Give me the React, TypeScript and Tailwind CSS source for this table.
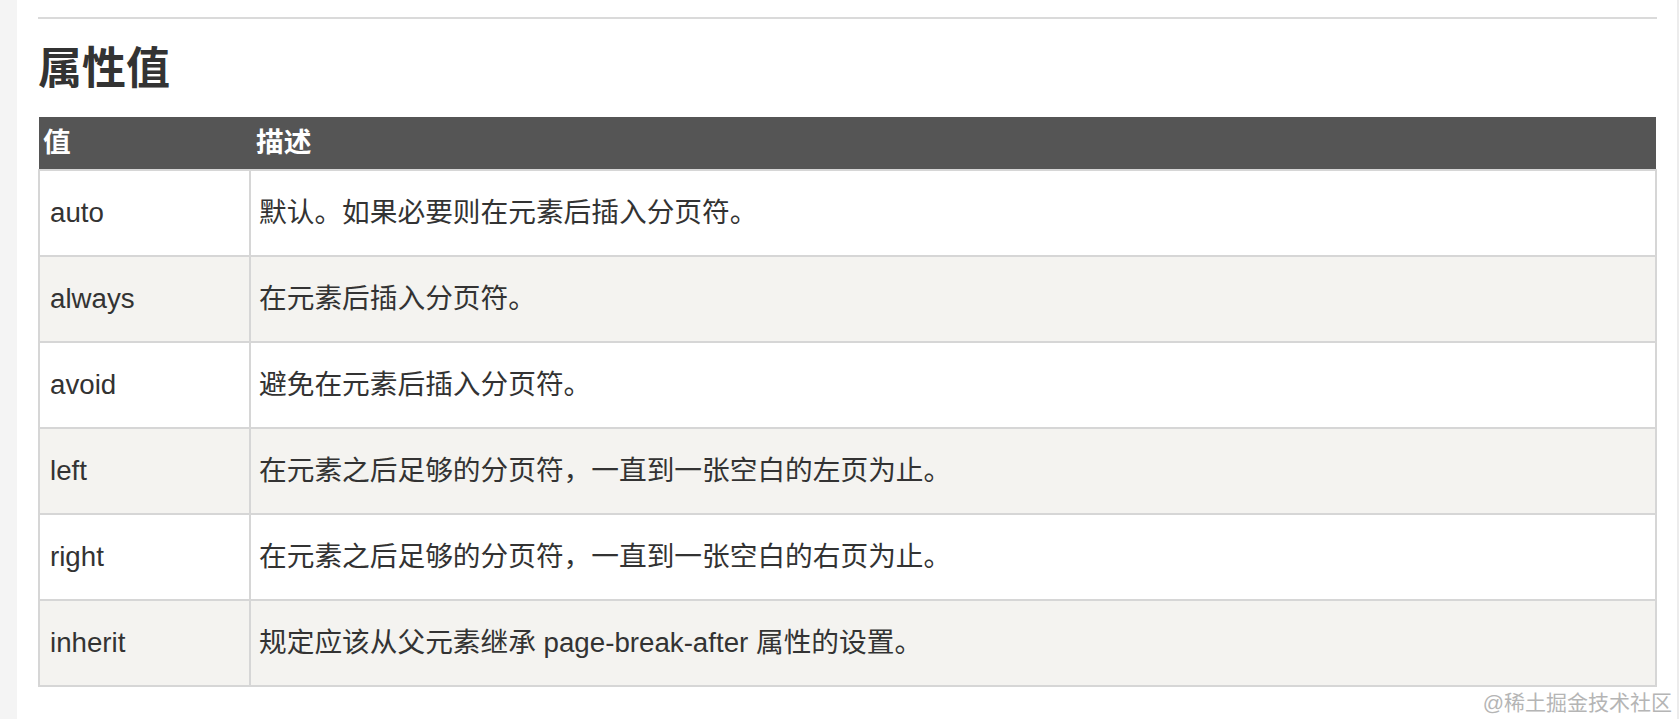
const rows = [
  { value: 'auto', desc: '默认。如果必要则在元素后插入分页符。' },
  { value: 'always', desc: '在元素后插入分页符。' },
  { value: 'avoid', desc: '避免在元素后插入分页符。' },
  { value: 'left', desc: '在元素之后足够的分页符，一直到一张空白的左页为止。' },
  { value: 'right', desc: '在元素之后足够的分页符，一直到一张空白的右页为止。' },
  { value: 'inherit', desc: '规定应该从父元素继承 page-break-after 属性的设置。' },
]

export default function App() {
  return (
    <div
      className="flex h-[719px] w-full overflow-hidden bg-white text-[#333]"
      style={{ fontFamily: '"Liberation Sans", Arial, "Noto Sans CJK SC", sans-serif' }}
    >
      {/* left gutter */}
      <div className="w-[17px] shrink-0 bg-[#f4f4f4]" />

      <div className="relative flex-1 pl-[21px] pr-[20px]">
        <hr className="mt-[17px] border-0 border-t-2 border-[#dadada]" />

        <h2 className="mt-[20px] text-[44px] font-bold leading-[60px] text-[#333]">属性值</h2>

        <table className="mt-[18px] w-full border-collapse text-[27.7px]">
          <thead>
            <tr className="h-[53px] bg-[#555555] text-left text-white">
              <th className="w-[211px] pl-[4px] font-bold">值</th>
              <th className="pl-[6px] font-bold">描述</th>
            </tr>
          </thead>
          <tbody>
            {rows.map((row, i) => (
              <tr key={row.value} className={`h-[86px] ${i % 2 === 1 ? 'bg-[#f4f3f0]' : 'bg-white'}`}>
                <td className="border-2 border-[#d6d6d6] pl-[10px] align-middle">{row.value}</td>
                <td className="border-2 border-[#d6d6d6] pl-[8px] align-middle">{row.desc}</td>
              </tr>
            ))}
          </tbody>
        </table>

        {/* watermark */}
        <div className="absolute bottom-[6px] right-[5px] text-[21px] leading-none text-[#b5b5b5]">
          @稀土掘金技术社区
        </div>
      </div>

      {/* right edge */}
      <div className="w-[2px] shrink-0 bg-[#ececec]" />
    </div>
  )
}
